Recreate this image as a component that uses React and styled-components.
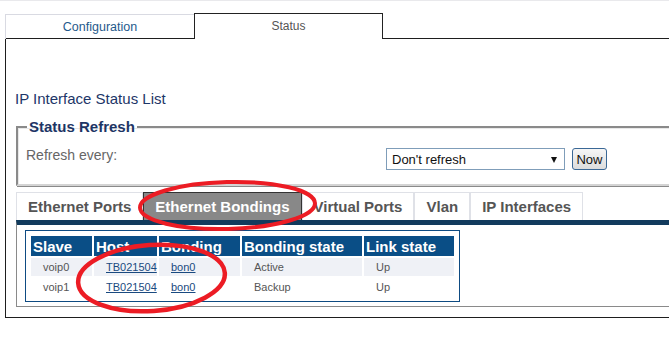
import styled, { createGlobalStyle } from "styled-components"

const GlobalStyle = createGlobalStyle`
  html, body {
    margin: 0;
    padding: 0;
    background: #fff;
    overflow: hidden;
  }
  body {
    font-family: "Liberation Sans", Arial, sans-serif;
  }
`

const Page = styled.div`
  position: relative;
  width: 669px;
  height: 356px;
  overflow: hidden;
  box-sizing: border-box;
  border-top: 1px solid #e9e9ec;
  padding-top: 12px;
`

const TopTabs = styled.div`
  position: relative;
  z-index: 1;
  display: flex;
  align-items: flex-end;
  margin: 0 0 -1px 5px;
`

const TopTab = styled.div`
  box-sizing: border-box;
  width: 189px;
  height: ${(p) => (p.$active ? "26px" : "25px")};
  display: flex;
  align-items: center;
  justify-content: center;
  font-size: ${(p) => (p.$active ? "12px" : "12.5px")};
  color: ${(p) => (p.$active ? "#555" : "#1f5a8c")};
  background: ${(p) => (p.$active ? "#fff" : "transparent")};
  border: 1px solid ${(p) => (p.$active ? "#222" : "#d9dae2")};
  border-bottom: none;
  border-right: ${(p) => (p.$active ? "1px solid #222" : "none")};
  padding-bottom: ${(p) => (p.$active ? "1px" : "0")};
`

const Panel = styled.div`
  box-sizing: border-box;
  width: 720px;
  margin-left: 5px;
  border: 1px solid #1e1e1e;
  padding: 0 0 10px 10px;
`

const Title = styled.div`
  margin: 51px 0 10px -1px;
  font-size: 15px;
  line-height: 18px;
  color: #1d3668;
`

const Fieldset = styled.fieldset`
  margin: 0;
  min-width: 0;
  border: 2px solid;
  border-color: #8a8a8a #d4d4d4 #d4d4d4 #8a8a8a;
  box-shadow: inset 1px 1px 0 #e8e8e8, 1px 1px 0 #8a8a8a;
  padding: 10px 0 14px 8px;
`

const Legend = styled.legend`
  margin-left: 1px;
  padding: 0 2px;
  font-size: 15px;
  line-height: 18px;
  font-weight: bold;
  color: #1d3565;
`

const RefreshRow = styled.div`
  display: flex;
  align-items: flex-start;
`

const RefreshLabel = styled.span`
  width: 360px;
  font-size: 14px;
  line-height: 18px;
  color: #666;
`

const SelectWrap = styled.div`
  position: relative;
  margin-top: 2px;
`

const Select = styled.select`
  appearance: none;
  box-sizing: border-box;
  width: 179px;
  height: 22px;
  border: 1px solid #7f9db9;
  border-radius: 0;
  background: #fff;
  padding: 0 0 0 5px;
  font-family: "Liberation Sans", Arial, sans-serif;
  font-size: 13px;
  color: #111;
`

const Arrow = styled.span`
  position: absolute;
  right: 8px;
  top: 9px;
  width: 0;
  height: 0;
  border-left: 3.5px solid transparent;
  border-right: 3.5px solid transparent;
  border-top: 6px solid #111;
  pointer-events: none;
`

const NowButton = styled.button`
  box-sizing: border-box;
  width: 35px;
  height: 22px;
  margin: 2px 0 0 7px;
  padding: 0;
  border: 1px solid #3a6896;
  border-radius: 3px;
  background: linear-gradient(#f6f6f6, #dcdcdc);
  font-family: "Liberation Sans", Arial, sans-serif;
  font-size: 13px;
  color: #111;
`

const SubTabs = styled.div`
  display: flex;
  margin-top: 6px;
`

const SubTab = styled.div`
  box-sizing: border-box;
  height: 28px;
  padding: 0 11px;
  display: flex;
  align-items: center;
  font-size: 15px;
  font-weight: bold;
  white-space: nowrap;
  color: ${(p) => (p.$active ? "#fff" : "#555")};
  background: ${(p) => (p.$active ? "#888" : "#fff")};
  border: 1px solid ${(p) => (p.$active ? "#333" : "#dfe1e7")};
  border-bottom: none;
`

const TabContent = styled.div`
  border-top: 5px solid #123b5d;
  border-left: 1px solid #8a8a8a;
  border-right: 1px solid #8a8a8a;
  border-bottom: 1px solid #8a8a8a;
  padding: 5px 0 4px 8px;
`

const TableBox = styled.div`
  display: inline-block;
  vertical-align: top;
  border: 1px solid #0e4b82;
  padding: 3px;
`

const Table = styled.table`
  border-collapse: separate;
  border-spacing: 2px;
  table-layout: fixed;
`

const Th = styled.th`
  box-sizing: border-box;
  height: 20px;
  width: ${(p) => p.$w}px;
  padding: 0 0 0 2px;
  background: #0a4e86;
  color: #fff;
  font-size: 15px;
  font-weight: bold;
  text-align: left;
  white-space: nowrap;
`

const Td = styled.td`
  height: 18px;
  padding: 0 0 0 12px;
  background: ${(p) => (p.$shade ? "#eff1f6" : "#fff")};
  color: #555;
  font-size: 11px;
  white-space: nowrap;
`

const Link = styled.a`
  color: #1a4a80;
  text-decoration: underline;
`

const Marks = styled.svg`
  position: absolute;
  left: 0;
  top: 0;
  pointer-events: none;
`

const columns = [
  ["Slave", 61],
  ["Host", 63],
  ["Bonding", 81],
  ["Bonding state", 120],
  ["Link state", 90],
]

const rows = [
  { slave: "voip0", host: "TB021504", bond: "bon0", state: "Active", link: "Up" },
  { slave: "voip1", host: "TB021504", bond: "bon0", state: "Backup", link: "Up" },
]

const subTabs = ["Ethernet Ports", "Ethernet Bondings", "Virtual Ports", "Vlan", "IP Interfaces"]

export default function App() {
  return (
    <>
      <GlobalStyle />
      <Page>
        <TopTabs>
          <TopTab>Configuration</TopTab>
          <TopTab $active>Status</TopTab>
        </TopTabs>
        <Panel>
          <Title>IP Interface Status List</Title>
          <Fieldset>
            <Legend>Status Refresh</Legend>
            <RefreshRow>
              <RefreshLabel>Refresh every:</RefreshLabel>
              <SelectWrap>
                <Select defaultValue="none">
                  <option value="none">Don't refresh</option>
                  <option value="5">5 seconds</option>
                  <option value="10">10 seconds</option>
                </Select>
                <Arrow />
              </SelectWrap>
              <NowButton>Now</NowButton>
            </RefreshRow>
          </Fieldset>
          <SubTabs>
            {subTabs.map((t) => (
              <SubTab key={t} $active={t === "Ethernet Bondings"}>
                {t}
              </SubTab>
            ))}
          </SubTabs>
          <TabContent>
            <TableBox>
              <Table>
                <thead>
                  <tr>
                    {columns.map(([name, w]) => (
                      <Th key={name} $w={w}>
                        {name}
                      </Th>
                    ))}
                  </tr>
                </thead>
                <tbody>
                  {rows.map((r, i) => (
                    <tr key={r.slave}>
                      <Td $shade={i === 0}>{r.slave}</Td>
                      <Td $shade={i === 0}>
                        <Link href="#">{r.host}</Link>
                      </Td>
                      <Td $shade={i === 0}>
                        <Link href="#">{r.bond}</Link>
                      </Td>
                      <Td $shade={i === 0}>{r.state}</Td>
                      <Td $shade={i === 0}>{r.link}</Td>
                    </tr>
                  ))}
                </tbody>
              </Table>
            </TableBox>
          </TabContent>
        </Panel>
        <Marks width="669" height="356" viewBox="0 0 669 356">
          <ellipse
            cx="227.5"
            cy="204.5"
            rx="87.5"
            ry="23.5"
            transform="rotate(-1.5 227.5 204.5)"
            fill="none"
            stroke="#ec1c24"
            strokeWidth="4"
          />
          <ellipse
            cx="151.5"
            cy="277"
            rx="73.5"
            ry="33"
            transform="rotate(-4 151.5 277)"
            fill="none"
            stroke="#ec1c24"
            strokeWidth="4.5"
          />
        </Marks>
      </Page>
    </>
  )
}
